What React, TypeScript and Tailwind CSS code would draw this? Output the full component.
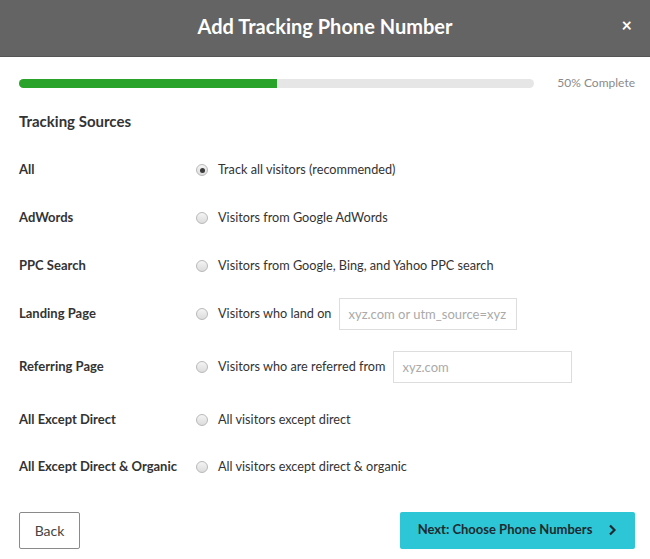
import React from 'react';

const font = { fontFamily: 'Lato, "Noto Sans", sans-serif' };

type Row = {
  label: string;
  text: string;
  h: string;
  checked?: boolean;
  input?: { placeholder: string; width: string };
};

const rows: Row[] = [
  { label: 'All', text: 'Track all visitors (recommended)', h: 'h-[47px]', checked: true },
  { label: 'AdWords', text: 'Visitors from Google AdWords', h: 'h-[48px]' },
  { label: 'PPC Search', text: 'Visitors from Google, Bing, and Yahoo PPC search', h: 'h-[48px]' },
  {
    label: 'Landing Page',
    text: 'Visitors who land on',
    h: 'h-[48px]',
    input: { placeholder: 'xyz.com or utm_source=xyz', width: 'w-[178px]' },
  },
  {
    label: 'Referring Page',
    text: 'Visitors who are referred from',
    h: 'h-[58px]',
    input: { placeholder: 'xyz.com', width: 'w-[179px]' },
  },
  { label: 'All Except Direct', text: 'All visitors except direct', h: 'h-[48px]' },
  { label: 'All Except Direct & Organic', text: 'All visitors except direct & organic', h: 'h-[46px]' },
];

const Radio: React.FC<{ checked?: boolean }> = ({ checked }) => (
  <span className="flex h-[12px] w-[12px] shrink-0 items-center justify-center rounded-full border border-[#b9b9b9] bg-gradient-to-b from-[#f4f4f4] to-[#dcdcdc]">
    {checked && <span className="h-[5px] w-[5px] rounded-full bg-[#3a3a3a]" />}
  </span>
);

export default function App() {
  return (
    <div className="h-[559px] w-[650px] bg-white text-[#333]" style={font}>
      {/* Header */}
      <div className="relative flex h-[57px] items-center justify-center border-b border-[#555] bg-[#646464] pb-[4px]">
        <h1 className="text-[20px] font-bold text-white">Add Tracking Phone Number</h1>
        <span className="absolute right-[18px] top-[12px] text-[18px] font-bold text-white">×</span>
      </div>

      {/* Progress */}
      <div className="flex items-center pl-[19px] pr-[15px] pt-[17px]">
        <div className="h-[9px] w-[515px] overflow-hidden rounded-full bg-[#e6e6e6]">
          <div className="h-full w-1/2 bg-[#29a329]" />
        </div>
        <span className="ml-auto text-[12px] text-[#8a8a8a]">50% Complete</span>
      </div>

      <h2 className="mt-[18px] px-[19px] text-[15px] font-bold text-[#333]">Tracking Sources</h2>

      {/* Sources */}
      <div className="mt-[14px] flex flex-col px-[19px]">
        {rows.map((r) => (
          <div key={r.label} className={`flex items-center ${r.h}`}>
            <span className="w-[177px] shrink-0 text-[13px] font-bold">{r.label}</span>
            <Radio checked={r.checked} />
            <span className="ml-[10px] text-[12.7px] text-[#333]">{r.text}</span>
            {r.input && (
              <input
                className={`ml-[8px] h-[32px] ${r.input.width} border border-[#ddd] px-[8px] text-[13px] placeholder:text-[#aaa] outline-none`}
                placeholder={r.input.placeholder}
              />
            )}
          </div>
        ))}
      </div>

      {/* Footer */}
      <div className="mt-[22px] flex items-center justify-between px-[19px] pr-[15px]">
        <button className="h-[37px] w-[61px] rounded-[2px] border border-[#8a8a8a] bg-white text-[14px] text-[#444]">
          Back
        </button>
        <button className="flex h-[37px] w-[235px] items-center justify-center gap-[16px] rounded-[2px] bg-[#2dc6d6] text-[13px] font-bold text-[#1f2a30]">
          Next: Choose Phone Numbers
          <svg width="9" height="12" viewBox="0 0 9 12" fill="none">
            <path d="M2 1.5L6.5 6L2 10.5" stroke="#1f2a30" strokeWidth="2.2" />
          </svg>
        </button>
      </div>
    </div>
  );
}
